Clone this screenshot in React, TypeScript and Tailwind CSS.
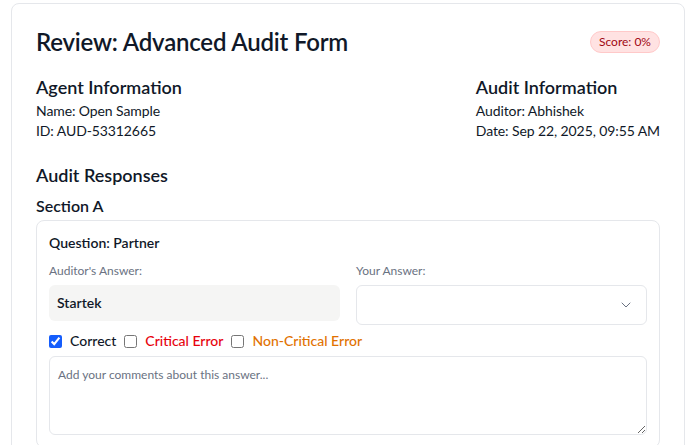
import { ChevronDown } from "lucide-react";

const font = { fontFamily: '"Lato", "Noto Sans", sans-serif' };

export default function App() {
  return (
    <div className="min-h-screen bg-white pl-[11px] pr-[6px] pt-[3px] text-gray-900" style={font}>
      <div className="rounded-lg border border-gray-200 bg-white px-6 pt-[22px] pb-10">
        {/* header */}
        <div className="flex items-center justify-between">
          <h1 className="text-2xl font-semibold leading-8 tracking-[-0.2px]">Review: Advanced Audit Form</h1>
          <span className="rounded-full border border-red-200 bg-red-100 px-2 py-0.5 text-xs text-red-800">
            Score: 0%
          </span>
        </div>

        {/* info */}
        <div className="mt-[15px] flex justify-between">
          <div>
            <h2 className="text-lg font-semibold leading-7">Agent Information</h2>
            <p className="text-sm leading-5 tracking-[-0.1px]">Name: Open Sample</p>
            <p className="text-sm leading-5 tracking-[-0.1px]">ID: AUD-53312665</p>
          </div>
          <div>
            <h2 className="text-lg font-semibold leading-7">Audit Information</h2>
            <p className="text-sm leading-5 tracking-[-0.1px]">Auditor: Abhishek</p>
            <p className="text-sm leading-5 tracking-[-0.1px]">Date: Sep 22, 2025, 09:55 AM</p>
          </div>
        </div>

        {/* responses */}
        <h2 className="mt-5 text-lg font-semibold leading-7">Audit Responses</h2>
        <h3 className="mt-[5px] text-base font-semibold leading-6">Section A</h3>

        <div className="mt-0.5 rounded-lg border border-gray-200 p-3">
          <p className="text-sm font-semibold leading-5">Question: Partner</p>

          <div className="mt-2.5 grid grid-cols-2 gap-4">
            <div>
              <label className="block text-xs leading-4 text-gray-500">Auditor's Answer:</label>
              <div className="mt-1.5 rounded-md bg-stone-100 px-2 py-2 text-sm font-semibold leading-5">
                Startek
              </div>
            </div>
            <div>
              <label className="block text-xs leading-4 text-gray-500">Your Answer:</label>
              <div className="mt-1.5 flex h-10 items-center justify-end rounded-md border border-gray-200 px-3">
                <ChevronDown size={16} strokeWidth={1.5} className="text-gray-500" />
              </div>
            </div>
          </div>

          <div className="mt-1.5 flex items-center gap-2 text-sm font-medium leading-5">
            <label className="flex items-center gap-2">
              <input type="checkbox" defaultChecked className="h-[13px] w-[13px] accent-blue-600" />
              <span>Correct</span>
            </label>
            <label className="flex items-center gap-2">
              <input type="checkbox" className="h-[13px] w-[13px]" />
              <span className="text-red-600">Critical Error</span>
            </label>
            <label className="flex items-center gap-2">
              <input type="checkbox" className="h-[13px] w-[13px]" />
              <span className="text-amber-600">Non-Critical Error</span>
            </label>
          </div>

          <textarea
            rows={3}
            placeholder="Add your comments about this answer..."
            className="mt-[5px] block h-[79px] w-full rounded-md border border-gray-200 px-2 py-2 text-xs leading-5 placeholder:text-gray-500"
          />
        </div>
      </div>
    </div>
  );
}
